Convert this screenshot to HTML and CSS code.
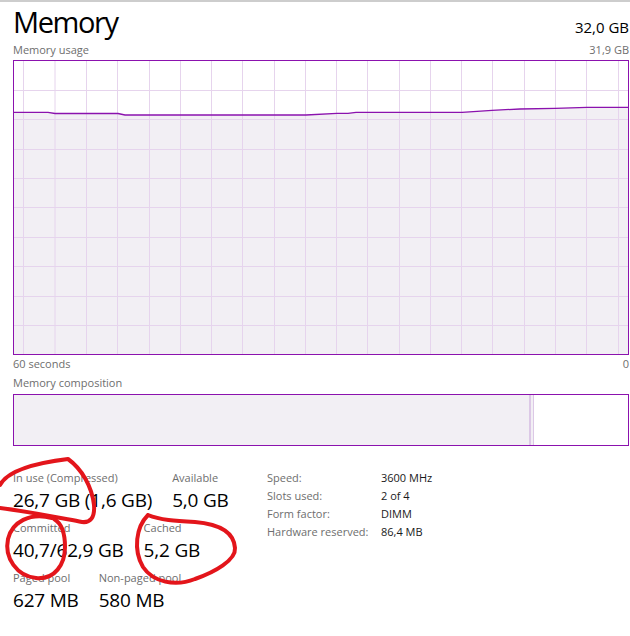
FILE: index.html
```html
<!DOCTYPE html>
<html lang="en">
<head>
<meta charset="utf-8">
<title>Memory</title>
<link rel="stylesheet" href="styles.css">
</head>
<body>
<div class="page">
  <header class="head">
    <h1 class="title">Memory</h1>
    <span class="total">32,0 GB</span>
  </header>
  <div class="caption-row usage-caption">
    <span>Memory usage</span>
    <span>31,9 GB</span>
  </div>
  <div class="graph">
    <svg class="graph-svg" width="614" height="293" viewBox="0 0 614 293">
      <polygon class="area" points="0,51.3 34,51.3 41,52.5 104,52.5 111,54 292,54 323,52.3 334,52.3 342,51.3 448,51.3 478,49.3 506,48 541,47.3 573,46.3 614,46.3 614,293 0,293"/>
      <g class="grid">
        <line x1="9.5" y1="0" x2="9.5" y2="293"/>
        <line x1="41" y1="0" x2="41" y2="293"/>
        <line x1="72.5" y1="0" x2="72.5" y2="293"/>
        <line x1="103.5" y1="0" x2="103.5" y2="293"/>
        <line x1="135.5" y1="0" x2="135.5" y2="293"/>
        <line x1="166.5" y1="0" x2="166.5" y2="293"/>
        <line x1="197.5" y1="0" x2="197.5" y2="293"/>
        <line x1="228.5" y1="0" x2="228.5" y2="293"/>
        <line x1="260.5" y1="0" x2="260.5" y2="293"/>
        <line x1="291.5" y1="0" x2="291.5" y2="293"/>
        <line x1="322.5" y1="0" x2="322.5" y2="293"/>
        <line x1="353.5" y1="0" x2="353.5" y2="293"/>
        <line x1="385.5" y1="0" x2="385.5" y2="293"/>
        <line x1="416.5" y1="0" x2="416.5" y2="293"/>
        <line x1="447.5" y1="0" x2="447.5" y2="293"/>
        <line x1="478.5" y1="0" x2="478.5" y2="293"/>
        <line x1="510.5" y1="0" x2="510.5" y2="293"/>
        <line x1="541.5" y1="0" x2="541.5" y2="293"/>
        <line x1="572.5" y1="0" x2="572.5" y2="293"/>
        <line x1="604.5" y1="0" x2="604.5" y2="293"/>
        <line x1="0" y1="29.5" x2="614" y2="29.5"/>
        <line x1="0" y1="58.5" x2="614" y2="58.5"/>
        <line x1="0" y1="88.5" x2="614" y2="88.5"/>
        <line x1="0" y1="117.5" x2="614" y2="117.5"/>
        <line x1="0" y1="146.5" x2="614" y2="146.5"/>
        <line x1="0" y1="176.5" x2="614" y2="176.5"/>
        <line x1="0" y1="205.5" x2="614" y2="205.5"/>
        <line x1="0" y1="235.5" x2="614" y2="235.5"/>
        <line x1="0" y1="264.5" x2="614" y2="264.5"/>
      </g>
      <polyline class="usage" points="0,51.3 34,51.3 41,52.5 104,52.5 111,54 292,54 323,52.3 334,52.3 342,51.3 448,51.3 478,49.3 506,48 541,47.3 573,46.3 614,46.3"/>
    </svg>
  </div>
  <div class="caption-row axis">
    <span>60 seconds</span>
    <span>0</span>
  </div>
  <div class="caption comp-caption">Memory composition</div>
  <div class="composition">
    <div class="seg seg-used"></div>
    <div class="seg seg-mod"></div>
    <div class="seg seg-free"></div>
  </div>
  <div class="details">
    <div class="stats">
      <div class="stat-row">
        <div class="stat"><div class="label">In use (Compressed)</div><div class="value">26,7 GB (1,6 GB)</div></div>
        <div class="stat"><div class="label">Available</div><div class="value">5,0 GB</div></div>
      </div>
      <div class="stat-row">
        <div class="stat"><div class="label">Committed</div><div class="value">40,7/62,9 GB</div></div>
        <div class="stat"><div class="label">Cached</div><div class="value">5,2 GB</div></div>
      </div>
      <div class="stat-row">
        <div class="stat"><div class="label">Paged pool</div><div class="value">627 MB</div></div>
        <div class="stat"><div class="label">Non-paged pool</div><div class="value">580 MB</div></div>
      </div>
    </div>
    <dl class="info">
      <dt>Speed:</dt><dd>3600 MHz</dd>
      <dt>Slots used:</dt><dd>2 of 4</dd>
      <dt>Form factor:</dt><dd>DIMM</dd>
      <dt>Hardware reserved:</dt><dd>86,4 MB</dd>
    </dl>
  </div>
  <svg class="annot" width="630" height="636" viewBox="0 0 630 636">
    <path d="M 0 483 C 8 468 35 461 68 457 C 82 467 92 485 94 503 C 95 516 90 521 82 520 C 55 515 25 509 0 506"/>
    <path d="M 52 516 C 30 510 12 520 8 537 C 4 556 17 574 36 576 C 55 578 65 562 65 545 C 65 530 61 521 54 517"/>
    <path d="M 148 513 C 136 525 133 548 143 565 C 153 580 175 585 195 577 C 215 570 236 558 235 546 C 234 530 218 522 195 520 C 175 519 160 518 148 513"/>
  </svg>
</div>
</body>
</html>
```
FILE: styles.css
```css
html, body {
  margin: 0;
  padding: 0;
  background: #ffffff;
}

body {
  font-family: "Open Sans", "Noto Sans", "Liberation Sans", sans-serif;
  color: #000000;
}

.page {
  position: relative;
  width: 630px;
  height: 636px;
  box-sizing: border-box;
  border-top: 2px solid #cdcdcd;
  padding: 0 1px 0 13px;
  overflow: hidden;
}

.head {
  display: flex;
  justify-content: space-between;
  align-items: baseline;
  height: 40px;
  box-sizing: border-box;
  padding-top: 1px;
}

.title {
  margin: 0;
  font-size: 29px;
  font-weight: 400;
  line-height: 38px;
  letter-spacing: -1.4px;
}

.total {
  font-size: 15px;
}

.caption-row {
  display: flex;
  justify-content: space-between;
  font-size: 11px;
  line-height: 16px;
  color: #6e6e6e;
}

.usage-caption {
  margin-bottom: 2px;
}

.caption {
  font-size: 11px;
  line-height: 16px;
  color: #6e6e6e;
}

.graph {
  height: 295px;
  box-sizing: border-box;
  border: 1px solid #8b12ae;
  background: #ffffff;
}

.graph-svg {
  display: block;
}

.area {
  fill: #f2eff4;
}

.grid line {
  stroke: #e6d4ed;
  stroke-width: 1;
}

.usage {
  fill: none;
  stroke: #8b12ae;
  stroke-width: 1.3;
}

.axis {
  margin-top: 1px;
}

.comp-caption {
  margin-top: 3px;
}

.composition {
  display: flex;
  height: 52px;
  box-sizing: border-box;
  border: 1px solid #8b12ae;
  margin-top: 3px;
}

.seg {
  height: 100%;
}

.seg-used {
  width: 515px;
  background: #f2eff4;
  border-right: 2px solid #dcc8e6;
}

.seg-mod {
  width: 2px;
  background: #f2eff4;
  border-right: 1px solid #dcc8e6;
}

.seg-free {
  flex: 1;
  background: #ffffff;
}

.details {
  display: grid;
  grid-template-columns: 254px auto;
  align-items: start;
  margin-top: 23px;
}

.stats {
  display: flex;
  flex-direction: column;
  gap: 5px;
}

.stat-row {
  display: flex;
  gap: 20px;
}

.label {
  font-size: 11px;
  line-height: 17px;
  color: #6e6e6e;
}

.value {
  font-size: 19px;
  line-height: 28px;
  letter-spacing: -0.2px;
}

.info {
  display: grid;
  grid-template-columns: 114px auto;
  align-content: start;
  margin: 0;
  font-size: 11px;
  line-height: 18px;
}

.info dt {
  color: #6e6e6e;
}

.info dd {
  margin: 0;
  color: #1a1a1a;
}

.annot {
  position: absolute;
  top: 0;
  left: 0;
  pointer-events: none;
}

.annot path {
  fill: none;
  stroke: #e3151b;
  stroke-width: 4;
  stroke-linecap: round;
  stroke-linejoin: round;
}
```
